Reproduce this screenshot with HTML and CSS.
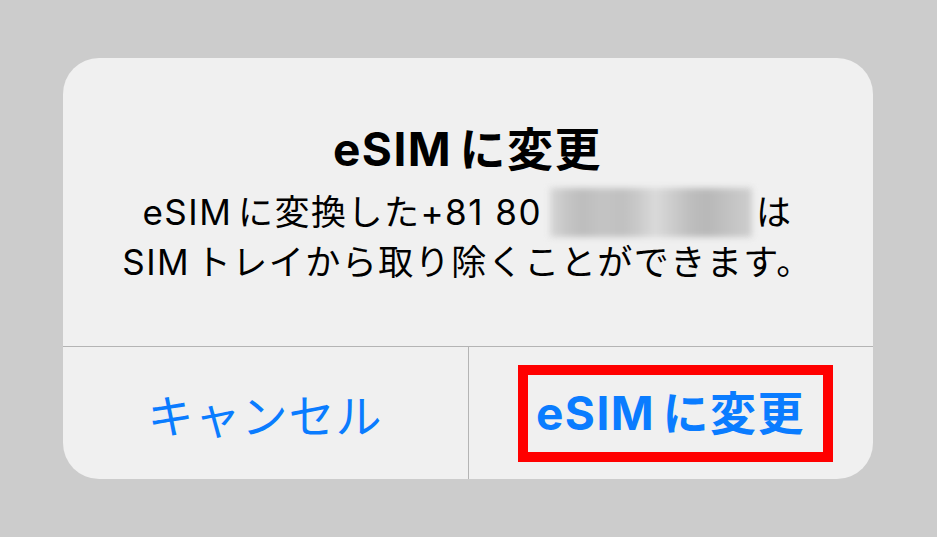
FILE: index.html
```html
<!DOCTYPE html>
<html lang="ja">
<head>
    <meta charset="UTF-8">
    <meta name="viewport" content="width=device-width, initial-scale=1.0">
    <title>eSIMに変更</title>
    <link rel="stylesheet" href="styles.css">
</head>
<body>
    <div class="alert">
        <div class="alert-body">
            <h1 class="alert-title"><span class="latin">eSIM</span>に変更</h1>
            <p class="alert-message">
                <span class="latin">eSIM</span>に変換した+81 80<span class="masked"></span>は<br>
                <span class="latin">SIM</span>トレイから取り除くことができます。
            </p>
        </div>
        <div class="alert-actions">
            <button class="action">キャンセル</button>
            <button class="action action-main"><span class="highlight"><span class="latin">eSIM</span>に変更</span></button>
        </div>
    </div>
</body>
</html>
```

FILE: styles.css
```css
body {
    margin: 0;
    min-height: 100vh;
    background-color: #cccccc;
    font-family: "Inter", "Noto Sans CJK JP", sans-serif;
    display: flex;
    align-items: center;
    justify-content: center;
}
.alert {
    width: 810px;
    background-color: #f0f0f0;
    border-radius: 36px;
    overflow: hidden;
    margin-left: -2px;
}
.alert-body {
    padding: 63px 20px 59px;
    text-align: center;
    border-bottom: 1px solid #b4b4b4;
}
.alert-title {
    margin: 0;
    font-size: 46px;
    line-height: 56px;
    font-weight: bold;
    letter-spacing: 1.5px;
    color: #000;
}
.latin {
    margin-right: 0.16em;
}
.alert-message {
    margin: 10px 0 0;
    font-size: 35px;
    line-height: 50px;
    letter-spacing: 1.5px;
    color: #000;
}
.masked {
    display: inline-block;
    width: 202px;
    height: 49px;
    margin-left: 8px;
    margin-right: 4px;
    vertical-align: -12px;
    background: linear-gradient(90deg, #d6d6d6 0%, #c6c6c6 8%, #bdbdbd 16%, #c4c4c4 26%, #c0c0c0 36%, #cacaca 44%, #dadada 52%, #cdcdcd 60%, #bdbdbd 70%, #b8b8b8 78%, #c2c2c2 88%, #cecece 100%);
    filter: blur(3px);
}
.alert-actions {
    display: grid;
    grid-template-columns: 1fr 1fr;
    height: 132px;
}
.action {
    border: none;
    background: none;
    font-family: inherit;
    font-size: 46px;
    letter-spacing: 1px;
    color: #0a7cff;
    display: flex;
    align-items: center;
    justify-content: center;
    padding: 0;
}
.action + .action {
    border-left: 1px solid #b4b4b4;
}
.action-main {
    font-weight: bold;
    letter-spacing: 1.5px;
}
.highlight {
    display: inline-block;
    border: 10px solid #ff0000;
    padding: 0 18px 0 8px;
    line-height: 77px;
    margin-left: 10px;
}
```
